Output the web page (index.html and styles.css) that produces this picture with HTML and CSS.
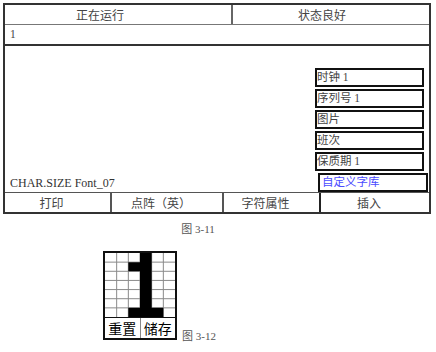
FILE: index.html
```html
<!DOCTYPE html>
<html lang="zh">
  <head>
    <meta charset="UTF-8" />
    <title>图 3-11</title>
    <link rel="stylesheet" href="styles.css">
  </head>
  <body>
    <div class="panel">
      <div class="head">
        <div class="cell run">正在运行</div>
        <div class="cell state">状态良好</div>
      </div>
      <div class="count">1</div>
      <div class="main">
        <div class="font-name">CHAR.SIZE Font_07</div>
        <ul class="fields">
          <li>时钟 1</li>
          <li>序列号 1</li>
          <li>图片</li>
          <li>班次</li>
          <li>保质期 1</li>
          <li class="custom">自定义字库</li>
        </ul>
      </div>
      <div class="foot">
        <div class="cell">打印</div>
        <div class="cell">点阵（英）</div>
        <div class="cell">字符属性</div>
        <div class="cell">插入</div>
      </div>
    </div>
    <p class="caption cap-11">图 3-11</p>
    <div class="fig-row">
      <div class="fig">
        <svg class="dots" width="70" height="64" viewBox="0 0 70 64">
          <g stroke="#8a8a8a" stroke-width="1">
            <path d="M11.67 0V64M23.33 0V64M35 0V64M46.67 0V64M58.33 0V64" />
            <path d="M0 9.14H70M0 18.29H70M0 27.43H70M0 36.57H70M0 45.71H70M0 54.86H70" />
          </g>
          <path d="M35 0H46.67V54.86H58.33V64H23.33V54.86H35V18.29H23.33V9.14H35Z" fill="#000" />
        </svg>
        <div class="btns">
          <span class="btn">重置</span>
          <span class="btn">储存</span>
        </div>
      </div>
      <span class="caption cap-12">图 3-12</span>
    </div>
  </body>
</html>
```

FILE: styles.css
```css
* {
  padding: 0;
  margin: 0;
  box-sizing: border-box;
}
body {
  background: #fff;
  color: #444;
  font-family: "Liberation Serif", "Noto Sans CJK SC", serif;
  font-size: 11.5px;
}
.panel {
  margin: 3px 0 0 3px;
  width: 428px;
  border: 2px solid #333;
}
.head {
  display: flex;
  height: 20px;
  border-bottom: 1px solid #777;
}
.cell {
  display: flex;
  align-items: center;
  justify-content: center;
  font-size: 12px;
}
.head .run {
  width: 228px;
  border-right: 2px solid #666;
  padding-right: 36px;
}
.head .state {
  flex: 1;
  padding-right: 18px;
}
.count {
  height: 21px;
  line-height: 19px;
  padding-left: 5px;
  border-bottom: 2px solid #333;
}
.main {
  display: flex;
  height: 146px;
}
.font-name {
  align-self: flex-end;
  padding: 0 0 2px 5px;
  line-height: 14px;
  font-size: 12px;
  color: #333;
}
.fields {
  list-style-type: none;
  margin: 22px 5px 0 auto;
  width: 109px;
  display: flex;
  flex-direction: column;
  gap: 2px;
}
.fields li {
  height: 19px;
  line-height: 15px;
  border: 2px solid #111;
  white-space: nowrap;
}
.fields .custom {
  margin: 0 -4px 0 3px;
  padding-left: 2px;
  color: #4b4bff;
}
.foot {
  display: flex;
  height: 20px;
  border-top: 1px solid #555;
}
.foot .cell {
  padding-right: 12px;
}
.foot .cell:nth-child(1) {
  width: 105px;
}
.foot .cell:nth-child(2) {
  width: 112px;
  border-left: 2px solid #555;
}
.foot .cell:nth-child(3) {
  width: 97px;
  border-left: 2px solid #555;
}
.foot .cell:nth-child(4) {
  flex: 1;
  border-left: 2px solid #222;
}
.caption {
  font-size: 11px;
  line-height: 14px;
  color: #555;
}
.cap-11 {
  width: 396px;
  margin-top: 8px;
  text-align: center;
}
.fig-row {
  display: flex;
  margin: 15px 0 0 103px;
  padding-bottom: 12px;
}
.fig {
  width: 74px;
  border: 2px solid #111;
}
.dots {
  display: block;
}
.btns {
  display: flex;
  height: 21px;
  border-top: 1px solid #111;
}
.btn {
  flex: 1;
  display: flex;
  align-items: center;
  justify-content: center;
  font-family: "Noto Sans CJK SC", sans-serif;
  font-size: 14px;
  color: #000;
  line-height: 1;
}
.btn + .btn {
  border-left: 1px solid #888;
}
.cap-12 {
  align-self: flex-end;
  margin: 0 0 -3px 5px;
}
```
